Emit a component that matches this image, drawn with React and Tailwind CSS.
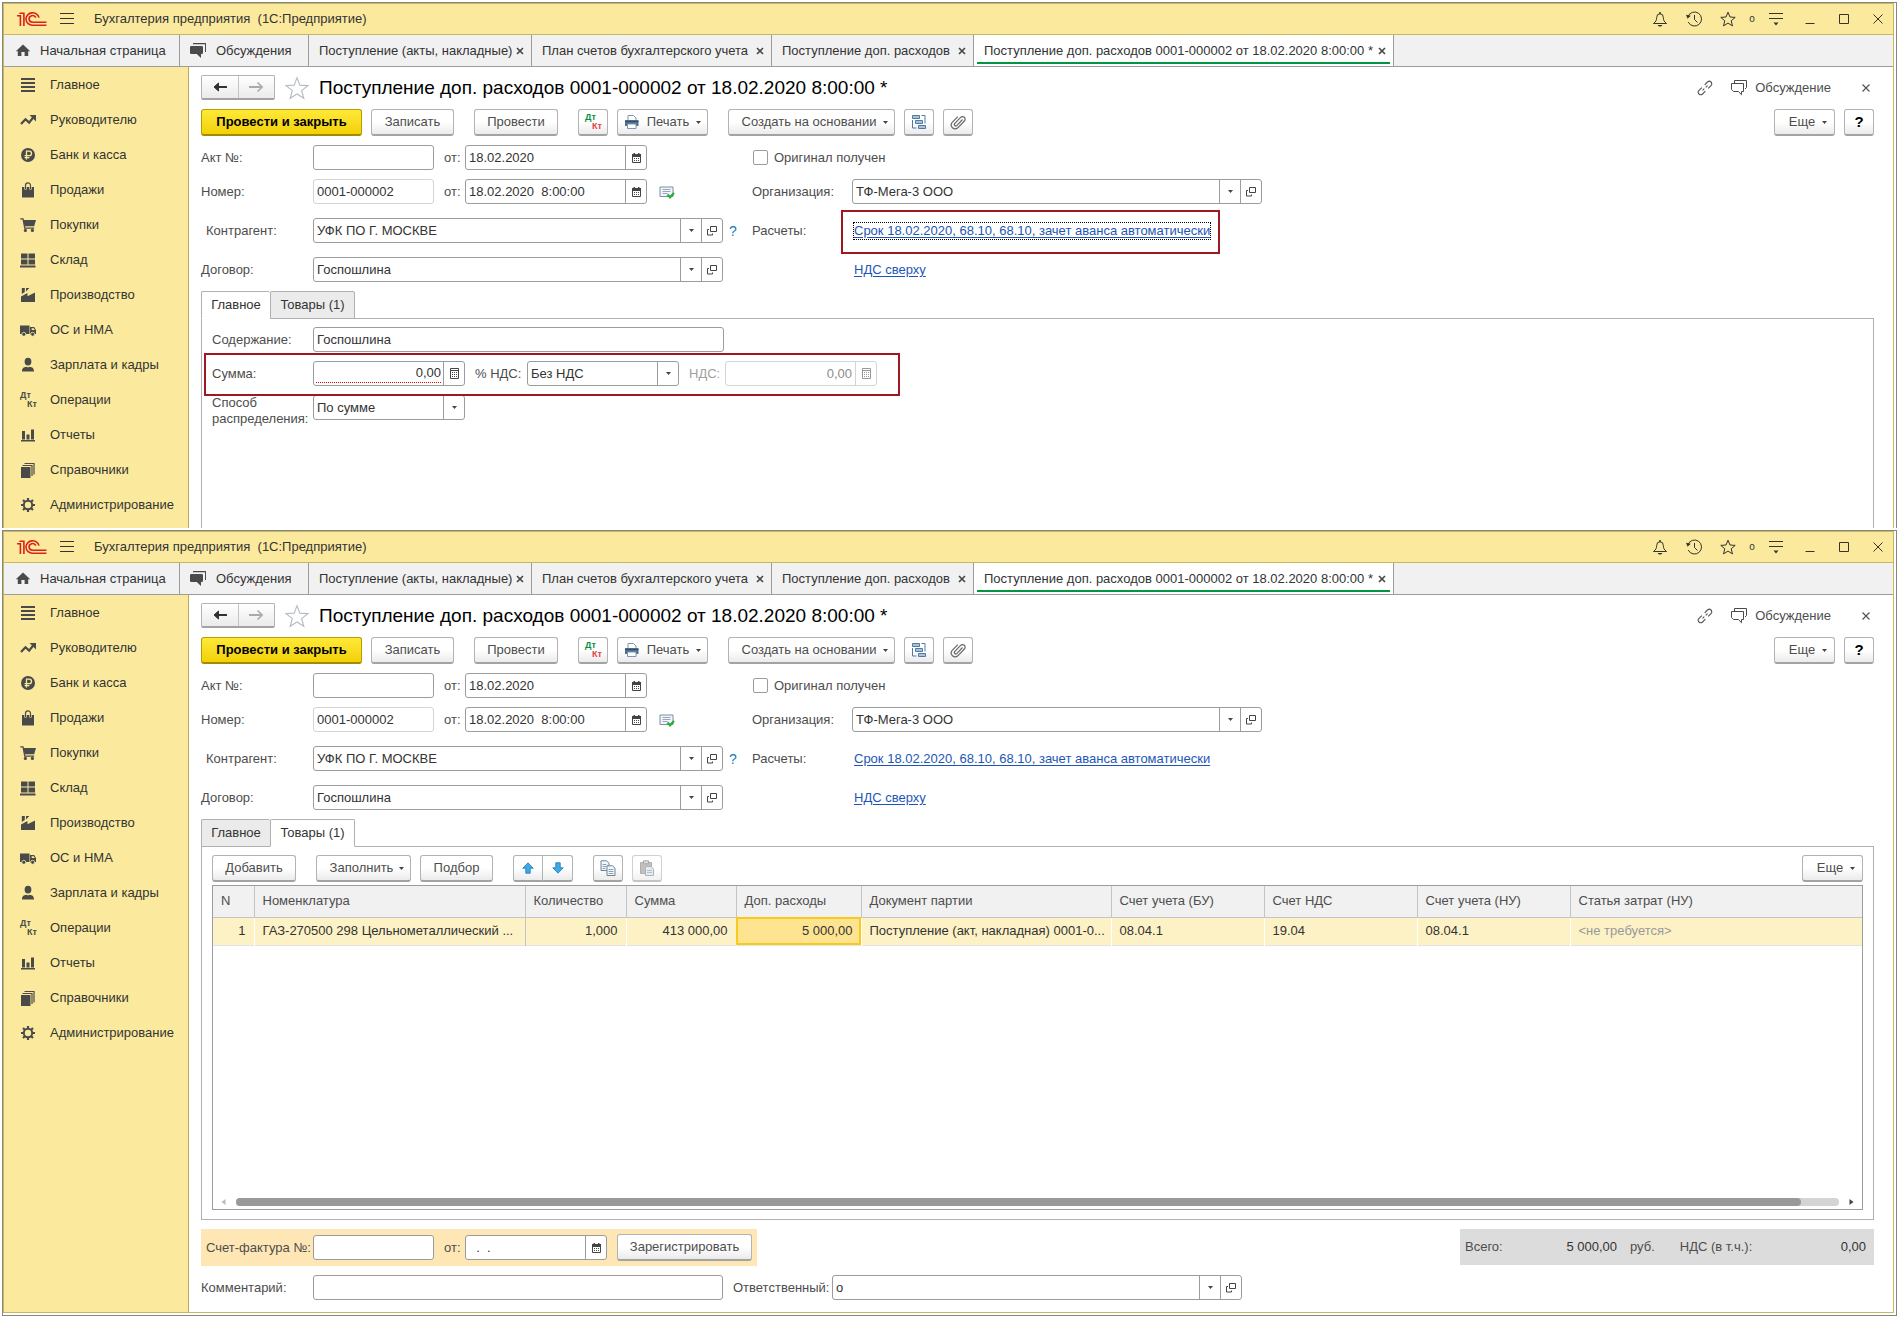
import React from "react";

const FONT = "font-['Liberation_Sans',Arial,sans-serif]";

function Svg({ w = 16, h = 16, children, className = "" }) {
  return (
    <svg width={w} height={h} viewBox={`0 0 ${w} ${h}`} fill="none" className={`shrink-0 ${className}`} aria-hidden="true">
      {children}
    </svg>
  );
}

/* ---------- icons ---------- */

const Logo = () => (
  <Svg w={30} h={16}>
    <g stroke="#d9211d" strokeWidth="1.6">
      <path d="M0 4.8L3.4 4.8V15M2.4 2.2H6.9V15" />
      <path d="M22 6.6A6.6 6.2 0 1 0 15.6 14.2H29.5" />
      <path d="M18.8 6.6A3.5 3.3 0 1 0 15.6 11.2H29.5" />
    </g>
  </Svg>
);

const Burger = () => (
  <Svg>
    <path d="M1 2.5h14M1 7.5h14M1 12.5h14" stroke="#333" strokeWidth="1" />
  </Svg>
);

const Home = () => (
  <Svg>
    <path d="M8 1.5L0.8 8.2h2V13h3.6V9h3.2v4h3.6V8.2h2z" fill="#4a4a4a" />
  </Svg>
);

const Chats = () => (
  <Svg w={18} h={17}>
    <path d="M4 1h13v9h-1V2.2H4z" fill="#4a4a4a" />
    <path d="M1 5.2Q1 4 2.2 4h10.6Q14 4 14 5.2v5.6q0 1.2-1.2 1.2H12v4l-4.2-4H2.2Q1 12 1 10.8z" fill="#4a4a4a" />
  </Svg>
);

const ChatsOutline = () => (
  <Svg w={18} h={17}>
    <path d="M1.5 4.5h12v8h-2v3.2l-3.2-3.2H3.5l-2-2z" stroke="#4a4a4a" />
    <path d="M4.5 4V1.5h12v7l-1.5 1.5" stroke="#4a4a4a" />
  </Svg>
);

const Lines = () => (
  <Svg>
    <path d="M1 2h14M1 6h14M1 10h14M1 14h14" stroke="#4a4a4a" strokeWidth="2" />
  </Svg>
);
const Trend = () => (
  <Svg>
    <path d="M1 12L5.5 7.2l3.6 3.4L13.6 5" stroke="#4a4a4a" strokeWidth="2.2" />
    <path d="M9.5 3H16v6.4z" fill="#4a4a4a" />
  </Svg>
);
const Ruble = () => (
  <Svg>
    <circle cx="8" cy="8" r="7" fill="#4a4a4a" />
    <path d="M6.5 12.5V4.2h2.8a2.2 2.2 0 0 1 0 4.4H4.6M4.6 10.6h4.8" stroke="#fbea9d" strokeWidth="1.3" />
  </Svg>
);
const Bag = () => (
  <Svg>
    <path d="M2 5h12v10.5H2z" fill="#4a4a4a" />
    <path d="M5.5 7.5V3.4a2.5 2.5 0 0 1 5 0v4.1" stroke="#fbea9d" strokeWidth="2.4" />
    <path d="M5.5 7V3.4a2.5 2.5 0 0 1 5 0V7" stroke="#4a4a4a" strokeWidth="1.2" />
  </Svg>
);
const Cart = () => (
  <Svg>
    <path d="M0.3 1.8H3l1.8 9.4h9.4" stroke="#4a4a4a" strokeWidth="1.3" />
    <path d="M3.4 3H16l-1.8 6.2H4.6z" fill="#4a4a4a" />
    <circle cx="5.4" cy="13.4" r="1.6" fill="#4a4a4a" />
    <circle cx="12.4" cy="13.4" r="1.6" fill="#4a4a4a" />
  </Svg>
);
const Stock = () => (
  <Svg>
    <path d="M1 1.5h6.5v5H1zM8.5 1.5H15v5H8.5zM1 7.5h6.5v5H1zM8.5 7.5H15v5H8.5zM0 13.5h15.5v2H0z" fill="#4a4a4a" />
  </Svg>
);
const Factory = () => (
  <Svg>
    <path d="M1 15V9.6L7.5 6v3.2L15 5.4V15z" fill="#4a4a4a" />
    <path d="M1.8 1h3v4l-3 2zM6 1h3.4L6 4.6z" fill="#4a4a4a" />
  </Svg>
);
const Truck = () => (
  <Svg>
    <path d="M0 3.500h9.500v8.500H0zM10 5h4.200L16 8v4h-6z" fill="#4a4a4a" />
    <path d="M11.6 6.200h2.200l1 1.800h-3.200z" fill="#fbea9d" />
    <circle cx="3.800" cy="12.300" r="2" fill="#4a4a4a" stroke="#fbea9d" strokeWidth=".8" />
    <circle cx="12.600" cy="12.300" r="2" fill="#4a4a4a" stroke="#fbea9d" strokeWidth=".8" />
  </Svg>
);
const Person = () => (
  <Svg>
    <ellipse cx="8" cy="4.6" rx="3.4" ry="3.9" fill="#4a4a4a" />
    <path d="M2 14.5c0-3.4 1.6-4.4 4.4-4.8Q8 11 9.6 9.7c2.8.4 4.4 1.4 4.4 4.8z" fill="#4a4a4a" />
  </Svg>
);
const DtKt = ({ top = "", bottom = "" }) => (
  <span className="relative block h-4 w-4 shrink-0 text-[9px] font-bold leading-none text-[#4a4a4a]" aria-hidden="true">
    <span className={`absolute left-0 -top-px ${top}`}>Дт</span>
    <span className={`absolute -right-px -bottom-px ${bottom}`}>Кт</span>
  </span>
);
const Bars = () => (
  <Svg>
    <path d="M1 13h14v1.4H1zM2 4h3v8.5H2zM6.5 7.5h3v5h-3zM11 2.5h3v10h-3z" fill="#4a4a4a" />
  </Svg>
);
const Books = () => (
  <Svg>
    <path d="M1 5h9.5v11H1z" fill="#4a4a4a" />
    <path d="M2.500 3.500h9.500V14M4.500 1.500h9.500V12.500" stroke="#4a4a4a" strokeWidth="1.2" />
  </Svg>
);
const Gear = () => (
  <Svg>
    <circle cx="8" cy="8" r="4.2" stroke="#4a4a4a" strokeWidth="2" />
    <path d="M8 1v2.5M8 12.5V15M1 8h2.5M12.5 8H15M3 3l1.8 1.8M11.2 11.2L13 13M13 3l-1.8 1.8M4.8 11.2L3 13" stroke="#4a4a4a" strokeWidth="2.2" />
  </Svg>
);

const Bell = () => (
  <Svg>
    <path d="M1.5 12.5h13c-2.5-2-3-3-3.200-6A3.300 3.600 0 0 0 8 2.800a3.300 3.600 0 0 0-3.300 3.700c-.2 3-.7 4-3.200 6z" stroke="#333" />
    <path d="M7 1.2h2v1.6H7zM5.5 14h5L9 15.6H7z" fill="#333" />
  </Svg>
);
const History = () => (
  <Svg>
    <path d="M2 5.5A7 7 0 1 1 2.2 11" stroke="#333" />
    <path d="M0 3.8l4.800 1L1.500 7.800z" fill="#333" />
    <path d="M8.5 4v4.500l3 3" stroke="#333" />
  </Svg>
);
const StarSmall = () => (
  <Svg>
    <path d="M8 1.2l2 4.800 5.200.4-4 3.400 1.300 5.100L8 12.100l-4.500 2.800 1.300-5.100-4-3.400L6 6z" stroke="#333" />
  </Svg>
);
const StarBig = () => (
  <Svg w={24} h={24}>
    <path d="M12 1.800l2.900 7.400 8 .4-6.200 5 2.100 7.700-6.800-4.300-6.800 4.300 2.100-7.700-6.200-5 8-.4z" stroke="#b9bec6" strokeWidth="1.2" />
  </Svg>
);
const Filter = () => (
  <Svg>
    <path d="M1 2.5h14M1 7.5h14" stroke="#333" />
    <path d="M5.5 11.5h5L8 14.5z" fill="#333" />
  </Svg>
);
const Minimize = () => (
  <Svg>
    <path d="M3.5 12.5h9" stroke="#333" />
  </Svg>
);
const Maximize = () => (
  <Svg>
    <path d="M3.5 3.5h9v9h-9z" stroke="#333" />
  </Svg>
);
const Cross = () => (
  <Svg>
    <path d="M3.5 3.5l9 9M12.5 3.5l-9 9" stroke="#333" />
  </Svg>
);
const TabCross = () => (
  <Svg w={8} h={8}>
    <path d="M1 1l6 6M7 1L1 7" stroke="#444" strokeWidth="1.6" />
  </Svg>
);
const FormCross = () => (
  <Svg w={8} h={8}>
    <path d="M.5.5l7 7M7.5.5l-7 7" stroke="#555" strokeWidth="1.2" />
  </Svg>
);
const Chain = () => (
  <Svg>
    <g stroke="#555" strokeWidth="1.1" transform="rotate(-45 8 8)">
      <path d="M6 5.500H2a2.500 2.500 0 0 0 0 5h4M10 5.500h4a2.500 2.500 0 0 1 0 5h-4M4.500 8h2.500M9 8h2.500" />
    </g>
  </Svg>
);
const ArrowL = () => (
  <Svg>
    <path d="M3 8h12" stroke="#333" strokeWidth="2" />
    <path d="M6.5 4L2 8l4.500 4z" fill="#333" stroke="#333" />
  </Svg>
);
const ArrowR = () => (
  <Svg>
    <path d="M1 8h12" stroke="#aaa" strokeWidth="2" />
    <path d="M9.5 3.500L14.200 8l-4.700 4.500" stroke="#aaa" strokeWidth="1.6" />
  </Svg>
);
const Caret = () => (
  <Svg w={5} h={3}>
    <path d="M0 0h5L2.500 3z" fill="#444" />
  </Svg>
);
const Calendar = () => (
  <Svg w={9} h={10}>
    <path d="M.5 1.500h8v8h-8z" stroke="#444" />
    <path d="M0 1h9v3H0zM1.500 0H3v2H1.500zM6 0h1.500v2H6z" fill="#444" />
    <path d="M2 5.500h5M2 7.500h5" stroke="#444" strokeDasharray="1 1" />
  </Svg>
);
const Calc = ({ color = "#444" }) => (
  <Svg w={9} h={11}>
    <path d="M.5.5h8v10h-8zM0 2.500h9" stroke={color} />
    <path d="M2 4.500h5M2 6.500h5M2 8.500h5" stroke={color} strokeDasharray="1 1" />
  </Svg>
);
const OpenIcon = () => (
  <Svg w={10} h={10}>
    <path d="M3.5.5h6v5h-6z" stroke="#444" />
    <path d="M2 3.500H.5v5.500h5V7.500" stroke="#444" />
  </Svg>
);
const Printer = () => (
  <Svg>
    <path d="M4 6V1.500h5.500L12 4v2" fill="#fff" stroke="#7d95ad" />
    <path d="M1 6h13.500v6H1z" fill="#4c6e8f" />
    <path d="M1 7.500h13.500" stroke="#33506c" />
    <path d="M3.500 10h8.500v4.500H3.500z" fill="#fff" stroke="#7d95ad" />
  </Svg>
);
const Structure = () => (
  <Svg>
    <path d="M1.5 1.500h7v3h-7zM4.500 6.500h7v3h-7zM7.500 11.500h7v3h-7z" fill="#a9c3dc" stroke="#4d7ba6" />
    <path d="M10.500 1.500h3.500v8M1.500 6v8h4" stroke="#4d7ba6" />
  </Svg>
);
const Clip = () => (
  <Svg>
    <path d="M12.5 5.500L6.800 11.600a1.500 1.500 0 0 1-2.200-2l6-6.200a2.600 2.600 0 0 1 3.800 3.600l-6.600 6.800a3.900 3.900 0 0 1-5.600-5.400L7.800 2.600" stroke="#666" strokeWidth="1.2" />
  </Svg>
);
const ListOk = () => (
  <Svg>
    <path d="M1 3h13v9.500H1z" fill="#f2f5f9" stroke="#7b8ea5" />
    <path d="M3.500 5.500h8M3.500 7.500h8M3.500 9.500h5" stroke="#9aa9ba" />
    <path d="M8.500 10.500l2.500 2.800L15 9" stroke="#2bab3f" strokeWidth="2.2" />
  </Svg>
);
const ArrowUp = () => (
  <Svg w={12} h={12}>
    <path d="M6 .8l5.200 5.400H8.200v5H3.800v-5H.8z" fill="#3fa9e8" stroke="#2b7db5" strokeWidth=".9" />
  </Svg>
);
const ArrowDown = () => (
  <Svg w={12} h={12}>
    <path d="M6 11.200L.8 5.800h3v-5h4.400v5h3z" fill="#3fa9e8" stroke="#2b7db5" strokeWidth=".9" />
  </Svg>
);
const Copy = () => (
  <Svg>
    <path d="M1 .8h5.500L9 3.200v7.300H1z" fill="#f5f8fb" stroke="#6d8299" />
    <path d="M2.500 4.500h4M2.500 6.500h4M2.500 8.500h3" stroke="#8ea2b8" />
    <path d="M7 5.800h5.500L15 8.200v7.300H7z" fill="#f5f8fb" stroke="#6d8299" />
    <path d="M8.500 9.500h5M8.500 11.500h5M8.500 13.500h5" stroke="#8ea2b8" />
  </Svg>
);
const Paste = () => (
  <Svg>
    <path d="M1.500 2.500h11v11h-11z" fill="#c3bfbc" stroke="#b2aeac" />
    <path d="M4.500.8h5v3h-5z" fill="#dcdcdc" stroke="#a9a9a9" />
    <path d="M6.500 6.500h5.500l2.500 2.500v6.500h-8z" fill="#e6ebf0" stroke="#a9b5c2" />
    <path d="M8 10.500h5M8 12.500h5" stroke="#b5c0cc" />
  </Svg>
);

/* ---------- controls ---------- */

const BUTTON_LOOKS = {
  plain: "border-[#b3b3b3] border-b-[#a3a3a3] from-white from-50% to-[#ebebeb] text-[#4d4d4d]",
  primary: "border-[#b89c00] border-b-[#a38a00] from-[#ffea35] to-[#f2d000] font-bold text-black",
  help: "border-[#b3b3b3] border-b-[#a3a3a3] from-white from-50% to-[#ebebeb] text-[15px] font-bold text-black",
  off: "border-[#d0d0d0] border-b-[#c4c4c4] from-white from-50% to-[#f1f1f1]",
};

function Button({ children, look = "plain", className = "", ...rest }) {
  return (
    <button
      type="button"
      className={`flex h-[27px] shrink-0 items-center justify-center rounded-[3px] border border-b-2 bg-linear-to-b ${BUTTON_LOOKS[look]} ${className}`}
      {...rest}
    >
      {children}
    </button>
  );
}

function Field({ label, value = "", width, buttons = [], muted = false, align = "", underline = false, id }) {
  const line = muted ? "border-[#d4d4d4]" : "border-[#9c9c9c]";
  const ink = muted && align ? "text-[#8c8c8c]" : "text-[#333]";
  return (
    <div className={`flex h-[25px] shrink-0 overflow-hidden rounded-[3px] border bg-white ${line} ${width}`}>
      <div className={`flex min-w-0 flex-1 ${underline ? "pb-[2px]" : ""}`}>
        <input
          id={id}
          aria-label={label}
          defaultValue={value}
          className={`min-w-0 flex-1 bg-transparent outline-none ${ink} ${align} ${underline ? "mx-[2px] border-b border-dotted border-[#e00] pt-[2px]" : "px-[3px]"}`}
        />
      </div>
      {buttons.map((b, i) => (
        <button key={i} type="button" aria-label={b.name} className={`flex w-[21px] shrink-0 items-center justify-center border-l ${line}`}>
          {b.icon}
        </button>
      ))}
    </div>
  );
}

function Choice({ id, value, width }) {
  return (
    <div className={`relative h-[25px] shrink-0 rounded-[3px] border border-[#9c9c9c] bg-white ${width}`}>
      <select id={id} className="h-full w-full appearance-none bg-transparent px-[3px] text-[#333] outline-none">
        <option>{value}</option>
      </select>
      <span className="pointer-events-none absolute inset-y-0 right-0 flex w-[21px] items-center justify-center border-l border-[#9c9c9c]">
        <Caret />
      </span>
    </div>
  );
}

const CAL = [{ name: "Календарь", icon: <Calendar /> }];
const PICK = [
  { name: "Выбрать", icon: <Caret /> },
  { name: "Открыть", icon: <OpenIcon /> },
];

/* ---------- window parts ---------- */

const SECTIONS = [
  ["Главное", Lines],
  ["Руководителю", Trend],
  ["Банк и касса", Ruble],
  ["Продажи", Bag],
  ["Покупки", Cart],
  ["Склад", Stock],
  ["Производство", Factory],
  ["ОС и НМА", Truck],
  ["Зарплата и кадры", Person],
  ["Операции", DtKt],
  ["Отчеты", Bars],
  ["Справочники", Books],
  ["Администрирование", Gear],
];

function TitleBar() {
  const cell = "flex w-[34px] items-center justify-center";
  return (
    <header className="flex h-[31px] items-stretch border-b border-[#c5b85e] bg-[#fbea9d] text-[#333]">
      <div className="flex flex-1 items-center pl-[13px]">
        <Logo />
        <button type="button" aria-label="Меню" className="ml-[12px]">
          <Burger />
        </button>
        <h1 className="ml-[19px] whitespace-pre">Бухгалтерия предприятия  (1С:Предприятие)</h1>
      </div>
      <button type="button" aria-label="Уведомления" className={cell}><Bell /></button>
      <button type="button" aria-label="История" className={cell}><History /></button>
      <button type="button" aria-label="Избранное" className={cell}><StarSmall /></button>
      <span className="flex w-[14px] items-center justify-center text-[10px]">o</span>
      <button type="button" aria-label="Настройки" className={cell}><Filter /></button>
      <button type="button" aria-label="Свернуть" className={cell}><Minimize /></button>
      <button type="button" aria-label="Развернуть" className={cell}><Maximize /></button>
      <button type="button" aria-label="Закрыть" className="flex w-[32px] items-center justify-center pl-[2px]"><Cross /></button>
    </header>
  );
}

function PageTab({ children, width, active = false }) {
  return (
    <div className={`relative flex shrink-0 items-center justify-between border-r border-[#9c9c9c] pl-[10px] pr-[7px] ${width} ${active ? "bg-white" : ""}`}>
      <a href="#page" className="whitespace-nowrap">{children}</a>
      <button type="button" aria-label="Закрыть вкладку"><TabCross /></button>
      {active && <span className="absolute inset-x-[3px] bottom-[2px] h-[2px] bg-[#009646]" />}
    </div>
  );
}

function PageTabs() {
  return (
    <nav className="flex h-8 items-stretch border-b border-[#9c9c9c] bg-[#f1f1f1] text-[#333]">
      <a href="#home" className="flex w-[176px] shrink-0 items-center gap-[9px] whitespace-nowrap border-r border-[#9c9c9c] pl-[11px]">
        <Home />
        Начальная страница
      </a>
      <a href="#talks" className="flex w-[129px] shrink-0 items-center gap-[9px] whitespace-nowrap border-r border-[#9c9c9c] pl-[9px]">
        <Chats />
        Обсуждения
      </a>
      <PageTab width="w-[223px]">Поступление (акты, накладные)</PageTab>
      <PageTab width="w-[240px]">План счетов бухгалтерского учета</PageTab>
      <PageTab width="w-[202px]">Поступление доп. расходов</PageTab>
      <PageTab width="w-[420px]" active>Поступление доп. расходов 0001-000002 от 18.02.2020 8:00:00 *</PageTab>
    </nav>
  );
}

function Sidebar() {
  return (
    <aside className="w-[185px] shrink-0 border-r border-[#b8ad62] bg-[#fbea9d] pb-[6px]">
      <ul>
        {SECTIONS.map(([name, Icon]) => (
          <li key={name}>
            <a href="#section" className="flex h-[35px] items-center gap-[14px] pl-4 text-[#333]">
              <Icon />
              {name}
            </a>
          </li>
        ))}
      </ul>
    </aside>
  );
}

function FormTop({ marked, uid }) {
  const row = "flex items-center";
  const left = "flex w-[551px] shrink-0 items-center";
  const lab = "w-[112px] shrink-0";
  return (
    <>
      <div className="flex h-[25px] items-center">
        <div className="flex h-[25px] w-[74px] rounded-[2px] border border-[#b3b3b3] border-b-2 border-b-[#a3a3a3] bg-linear-to-b from-white to-[#ebebeb]">
          <button type="button" aria-label="Назад" className="flex flex-1 items-center justify-center border-r border-[#c4c4c4]"><ArrowL /></button>
          <button type="button" aria-label="Вперед" className="flex flex-1 items-center justify-center"><ArrowR /></button>
        </div>
        <button type="button" aria-label="В избранное" className="ml-[10px]"><StarBig /></button>
        <h2 className="ml-[10px] flex-1 text-[19px] leading-6 text-black">Поступление доп. расходов 0001-000002 от 18.02.2020 8:00:00 *</h2>
        <button type="button" aria-label="Ссылка" className="mr-[17px]"><Chain /></button>
        <button type="button" className="flex items-center gap-[7px]"><ChatsOutline />Обсуждение</button>
        <button type="button" aria-label="Закрыть" className="ml-[31px] mr-[4px]"><FormCross /></button>
      </div>

      <div className="mt-[9px] flex">
        <Button look="primary" className="w-[161px]">Провести и закрыть</Button>
        <Button className="ml-[9px] w-[83px]">Записать</Button>
        <Button className="ml-5 w-[84px]">Провести</Button>
        <Button aria-label="Проводки" className="ml-5 w-[30px]"><DtKt top="text-[#0a8f43]" bottom="text-[#e04545]" /></Button>
        <Button className="ml-[9px] w-[91px] gap-[7px]"><Printer />Печать<Caret /></Button>
        <Button className="ml-5 w-[167px] gap-[7px] pl-[7px]">Создать на основании<Caret /></Button>
        <Button aria-label="Структура" className="ml-[9px] w-[30px]"><Structure /></Button>
        <Button aria-label="Файлы" className="ml-[9px] w-[30px]"><Clip /></Button>
        <Button className="ml-auto w-[61px] gap-[7px] pl-[7px]">Еще<Caret /></Button>
        <Button look="help" aria-label="Справка" className="ml-[9px] w-[30px]">?</Button>
      </div>

      <div className={`${row} mt-[9px]`}>
        <div className={left}>
          <label htmlFor={`${uid}-act`} className={lab}>Акт №:</label>
          <Field id={`${uid}-act`} width="w-[121px]" />
          <label htmlFor={`${uid}-actdate`} className="ml-[10px] w-[21px]">от:</label>
          <Field id={`${uid}-actdate`} width="w-[182px]" value="18.02.2020" buttons={CAL} />
        </div>
        <label className="flex items-center gap-[6px] pl-px">
          <input type="checkbox" className="h-[15px] w-[15px] appearance-none rounded-[2px] border border-[#9c9c9c] bg-white" />
          Оригинал получен
        </label>
      </div>

      <div className={`${row} mt-[9px]`}>
        <div className={left}>
          <label htmlFor={`${uid}-num`} className={lab}>Номер:</label>
          <Field id={`${uid}-num`} width="w-[121px]" value="0001-000002" muted />
          <label htmlFor={`${uid}-date`} className="ml-[10px] w-[21px]">от:</label>
          <Field id={`${uid}-date`} width="w-[182px]" value="18.02.2020  8:00:00" buttons={CAL} />
          <span className="ml-[12px]"><ListOk /></span>
        </div>
        <label htmlFor={`${uid}-org`} className="w-[100px] shrink-0">Организация:</label>
        <Field id={`${uid}-org`} width="w-[410px]" value="ТФ-Мега-3 ООО" buttons={PICK} />
      </div>

      <div className={`${row} mt-[14px]`}>
        <div className={left}>
          <label htmlFor={`${uid}-partner`} className={`${lab} pl-[5px]`}>Контрагент:</label>
          <Field id={`${uid}-partner`} width="w-[410px]" value="УФК ПО Г. МОСКВЕ" buttons={PICK} />
          <button type="button" className="ml-[6px] text-[14px] text-[#1b78b8]">?</button>
        </div>
        <span className="w-[101px] shrink-0">Расчеты:</span>
        <span className="relative">
          {marked && <span className="pointer-events-none absolute -bottom-[14px] -left-3 -right-[9px] -top-[12px] border-2 border-[#9f1720]" />}
          <a href="#terms" className={`block whitespace-nowrap border border-dotted text-[#1e56b8] underline underline-offset-2 ${marked ? "border-black" : "border-transparent"}`}>
            Срок 18.02.2020, 68.10, 68.10, зачет аванса автоматически
          </a>
        </span>
      </div>

      <div className={`${row} mt-[14px]`}>
        <div className={left}>
          <label htmlFor={`${uid}-contract`} className={lab}>Договор:</label>
          <Field id={`${uid}-contract`} width="w-[410px]" value="Госпошлина" buttons={PICK} />
        </div>
        <a href="#vat" className="ml-[102px] text-[#1e56b8] underline underline-offset-2">НДС сверху</a>
      </div>
    </>
  );
}

function FormTabs({ active }) {
  const on = "bg-white border-b-white";
  const off = "bg-[#ebebeb] border-b-[#b0b0b0]";
  return (
    <div role="tablist" className="relative z-10 -mb-px mt-[9px] flex text-[#333]">
      <button type="button" role="tab" aria-selected={active === 0} className={`h-7 w-[69px] rounded-t-[2px] border border-r-0 border-[#b0b0b0] ${active === 0 ? on : off}`}>Главное</button>
      <button type="button" role="tab" aria-selected={active === 1} className={`h-7 w-[85px] rounded-t-[2px] border border-[#b0b0b0] ${active === 1 ? on : off}`}>Товары (1)</button>
    </div>
  );
}

function MainPanel() {
  const lab = "w-[101px] shrink-0";
  return (
    <div className="flex-1 border border-b-0 border-[#b0b0b0] pl-[10px] pt-2">
      <div className="flex items-center">
        <label htmlFor="content" className={lab}>Содержание:</label>
        <Field id="content" width="w-[411px]" value="Госпошлина" />
      </div>
      <div className="relative mt-[9px] flex w-fit items-center">
        <label htmlFor="sum" className={lab}>Сумма:</label>
        <Field id="sum" width="w-[152px]" value="0,00" align="text-right" underline buttons={[{ name: "Калькулятор", icon: <Calc /> }]} />
        <label htmlFor="rate" className="ml-[10px] w-[52px] whitespace-nowrap">% НДС:</label>
        <Choice id="rate" width="w-[152px]" value="Без НДС" />
        <label htmlFor="vat" className="ml-[10px] w-[36px] text-[#a0a0a0]">НДС:</label>
        <Field id="vat" width="w-[152px]" value="0,00" align="text-right" muted buttons={[{ name: "Калькулятор", icon: <Calc color="#999" /> }]} />
        <span className="pointer-events-none absolute -bottom-[10px] -left-2 -right-[23px] -top-2 z-10 border-2 border-[#9f1720]" />
      </div>
      <div className="mt-[9px] flex items-start">
        <label htmlFor="method" className={`${lab} leading-4`}>Способ распределения:</label>
        <Choice id="method" width="w-[152px]" value="По сумме" />
      </div>
    </div>
  );
}

const COLUMNS = [
  ["N", "w-[41px]"],
  ["Номенклатура", "w-[271px]"],
  ["Количество", "w-[101px]"],
  ["Сумма", "w-[110px]"],
  ["Доп. расходы", "w-[125px]"],
  ["Документ партии", "w-[250px]"],
  ["Счет учета (БУ)", "w-[153px]"],
  ["Счет НДС", "w-[153px]"],
  ["Счет учета (НУ)", "w-[153px]"],
  ["Статья затрат (НУ)", ""],
];
const ROW = ["1", "ГАЗ-270500 298 Цельнометаллический ...", "1,000", "413 000,00", "5 000,00", "Поступление (акт, накладная) 0001-0...", "08.04.1", "19.04", "08.04.1", "<не требуется>"];
const RIGHT = [0, 2, 3, 4];

function GoodsPanel() {
  return (
    <div className="flex flex-1 flex-col border border-[#b0b0b0] px-[10px] pb-[9px] pt-2">
      <div className="flex">
        <Button className="w-[84px]">Добавить</Button>
        <Button className="ml-5 w-[95px] gap-[6px] pl-[7px]">Заполнить<Caret /></Button>
        <Button className="ml-[9px] w-[73px]">Подбор</Button>
        <Button aria-label="Вверх" className="ml-5 w-[30px] rounded-r-none"><ArrowUp /></Button>
        <Button aria-label="Вниз" className="-ml-px w-[31px] rounded-l-none"><ArrowDown /></Button>
        <Button aria-label="Копировать" className="ml-5 w-[30px]"><Copy /></Button>
        <Button look="off" aria-label="Вставить" className="ml-[9px] w-[30px]"><Paste /></Button>
        <Button className="ml-auto w-[61px] gap-[7px] pl-[7px]">Еще<Caret /></Button>
      </div>
      <div className="mt-[3px] flex flex-1 flex-col border border-[#9c9c9c]">
        <div className="flex-1">
          <table className="w-full table-fixed border-collapse">
            <thead>
              <tr className="h-[31px] border-b border-[#c4c4c4]">
                {COLUMNS.map(([name, w]) => (
                  <th key={name} scope="col" className={`border-r border-[#c4c4c4] bg-[#f1f1f1] pl-2 text-left font-normal text-[#4d4d4d] last:border-r-0 ${w}`}>{name}</th>
                ))}
              </tr>
            </thead>
            <tbody>
              <tr className="h-7 border-b border-[#e2e2e2] bg-[#fdf2c6] text-[#333]">
                {ROW.map((v, i) => (
                  <td
                    key={i}
                    className={`whitespace-nowrap border-r px-2 last:border-r-0 ${i === 1 ? "border-r-[#c4c4c4]" : "border-r-white"} ${RIGHT.includes(i) ? "text-right" : ""} ${i === 4 ? "bg-[#fee391] outline-2 -outline-offset-2 outline-[#fac91e]" : ""} ${i === 9 ? "text-[#999]" : ""}`}
                  >
                    {v}
                  </td>
                ))}
              </tr>
            </tbody>
          </table>
        </div>
        <div className="mb-[3px] flex h-2 items-center">
          <Svg w={5} h={8} className="ml-[8px]"><path d="M4.500 1v6L.5 4z" fill="#bbb" /></Svg>
          <div className="ml-[10px] h-2 flex-1 rounded-full bg-[#d4d4d4]">
            <div className="h-2 w-[97.6%] rounded-full bg-[#999]" />
          </div>
          <Svg w={5} h={8} className="ml-[10px] mr-[8px]"><path d="M.5 1v6l4-3z" fill="#444" /></Svg>
        </div>
      </div>
    </div>
  );
}

function Footer() {
  return (
    <footer className="pb-3">
      <div className="mt-[9px] flex items-start justify-between">
        <div className="flex h-[37px] w-[556px] items-center bg-[#ffe7b5] pl-[5px]">
          <label htmlFor="invoice" className="w-[107px] shrink-0">Счет-фактура №:</label>
          <Field id="invoice" width="w-[121px]" />
          <label htmlFor="invdate" className="ml-[10px] w-[21px]">от:</label>
          <Field id="invdate" width="w-[142px]" value="  .  ." buttons={CAL} />
          <Button className="ml-[10px] w-[135px]">Зарегистрировать</Button>
        </div>
        <div className="flex h-[36px] w-[414px] items-center bg-[#dcdcdc] pl-[5px] pr-2">
          <span className="w-[46px]">Всего:</span>
          <output className="w-[106px] text-right text-[#333]">5 000,00</output>
          <span className="ml-[13px]">руб.</span>
          <span className="ml-[25px]">НДС (в т.ч.):</span>
          <output className="ml-auto text-[#333]">0,00</output>
        </div>
      </div>
      <div className="mt-[9px] flex items-center">
        <label htmlFor="comment" className="w-[112px] shrink-0">Комментарий:</label>
        <Field id="comment" width="w-[410px]" />
        <label htmlFor="owner" className="ml-[10px] w-[99px] shrink-0 whitespace-nowrap">Ответственный:</label>
        <Field id="owner" width="w-[410px]" value="о" buttons={PICK} />
      </div>
    </footer>
  );
}

function Window({ children, marked, uid, tab, className, frame }) {
  return (
    <section className={`flex flex-col border border-[#858585] pr-[2px] ${className}`}>
      <div className={`flex flex-1 flex-col border border-[#c5b85e] ${frame}`}>
        <TitleBar />
        <PageTabs />
        <div className="flex flex-1">
          <Sidebar />
          <main className="flex min-w-0 flex-1 flex-col pl-3 pr-[19px] pt-2">
            <FormTop marked={marked} uid={uid} />
            <FormTabs active={tab} />
            {children}
          </main>
        </div>
      </div>
    </section>
  );
}

export default function App() {
  return (
    <div className={`${FONT} flex min-h-screen flex-col gap-[2px] bg-white pb-[5px] pl-[2px] pr-[7px] pt-[2px] text-[13px] leading-4 text-[#4d4d4d]`}>
      <Window uid="a" tab={0} marked className="border-b-0" frame="border-b-0">
        <MainPanel />
      </Window>
      <Window uid="b" tab={1} className="flex-1 pb-[2px]" frame="">
        <GoodsPanel />
        <Footer />
      </Window>
    </div>
  );
}
